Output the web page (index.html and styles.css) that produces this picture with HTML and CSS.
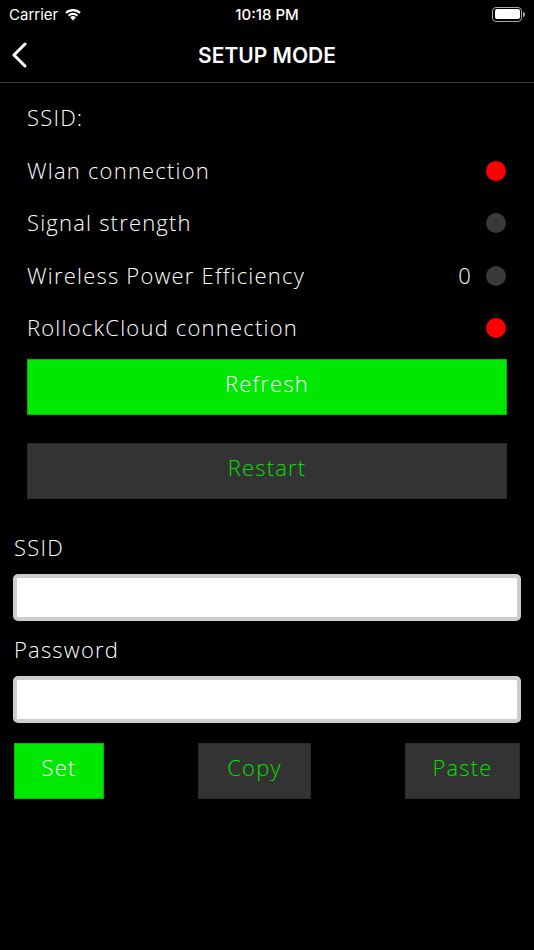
FILE: index.html
```html
<!DOCTYPE html>
<html>
<head>
    <title>Setup Mode</title>
    <link rel="stylesheet" href="styles.css">
</head>
<body>
    <div class="status-bar">
        <div class="carrier">
            Carrier
            <svg class="wifi" width="18" height="13" viewBox="0 0 18 13">
                <path d="M9 12.5 L6.2 9.4 A4 4 0 0 1 11.8 9.4 Z" fill="#fff"/>
                <path d="M3.9 6.9 A7.4 7.4 0 0 1 14.1 6.9 L12.6 8.5 A5.2 5.2 0 0 0 5.4 8.5 Z" fill="#fff"/>
                <path d="M1.2 4.1 A11.2 11.2 0 0 1 16.8 4.1 L15.3 5.7 A9 9 0 0 0 2.7 5.7 Z" fill="#fff"/>
            </svg>
        </div>
        <div class="time">10:18 PM</div>
        <div class="battery">
            <div class="battery-body"><div class="battery-fill"></div></div>
            <div class="battery-tip"></div>
        </div>
    </div>

    <div class="nav-bar">
        <svg class="back" width="18" height="26" viewBox="0 0 18 26">
            <path d="M14 2 L3 13 L14 24" fill="none" stroke="#fff" stroke-width="3" stroke-linecap="round" stroke-linejoin="round"/>
        </svg>
        <h1>SETUP MODE</h1>
    </div>

    <div class="status-section">
        <div class="row"><span>SSID:</span></div>
        <div class="row"><span>Wlan connection</span><span class="dot red"></span></div>
        <div class="row"><span>Signal strength</span><span class="dot grey"></span></div>
        <div class="row"><span>Wireless Power Efficiency</span><span class="value">0</span><span class="dot grey"></span></div>
        <div class="row"><span>RollockCloud connection</span><span class="dot red"></span></div>

        <button class="wide primary">Refresh</button>
        <button class="wide secondary">Restart</button>
    </div>

    <div class="form-section">
        <label for="ssid">SSID</label>
        <input type="text" id="ssid">
        <label for="password">Password</label>
        <input type="text" id="password">

        <div class="actions">
            <button class="primary set">Set</button>
            <button class="secondary copy">Copy</button>
            <button class="secondary paste">Paste</button>
        </div>
    </div>
</body>
</html>
```

FILE: styles.css
```css
body {
    margin: 0;
    background-color: #000;
    color: #fff;
    font-family: "Open Sans", "Noto Sans", sans-serif;
    font-weight: 300;
    width: 534px;
    height: 950px;
    overflow: hidden;
}
.status-bar {
    height: 28px;
    display: flex;
    align-items: center;
    justify-content: space-between;
    padding: 0 9px;
    font-family: Inter, "Liberation Sans", sans-serif;
    font-weight: 400;
    font-size: 15px;
    position: relative;
}
.carrier {
    display: flex;
    align-items: center;
    gap: 6px;
    width: 120px;
}
.time {
    font-weight: 500;
}
.battery {
    width: 120px;
    display: flex;
    justify-content: flex-end;
    align-items: center;
}
.battery-body {
    width: 25px;
    height: 10px;
    border: 1.5px solid #aaa;
    border-radius: 4px;
    padding: 1.5px;
}
.battery-fill {
    width: 100%;
    height: 100%;
    background-color: #fff;
    border-radius: 2px;
}
.battery-tip {
    width: 2px;
    height: 5px;
    background-color: #aaa;
    border-radius: 0 2px 2px 0;
    margin-left: 1px;
}
.nav-bar {
    height: 54px;
    display: flex;
    align-items: center;
    justify-content: center;
    border-bottom: 1px solid #3c3c3c;
    position: relative;
}
.back {
    position: absolute;
    left: 11px;
    top: 14px;
}
h1 {
    margin: 0;
    font-family: Inter, "Liberation Sans", sans-serif;
    font-size: 21px;
    font-weight: 600;
}
.status-section {
    padding: 8px 27px 0 27px;
}
.row {
    height: 52.5px;
    display: flex;
    align-items: center;
    font-size: 22px;
    letter-spacing: 1.2px;
}
.row span:first-child {
    flex: 1;
}
.value {
    margin-right: 14px;
}
.dot {
    width: 20px;
    height: 20px;
    border-radius: 50%;
    margin-right: 1px;
    margin-top: 2px;
}
.dot.red {
    background-color: #ff0000;
}
.dot.grey {
    background-color: #3a3a3a;
}
button {
    font-family: "Open Sans", "Noto Sans", sans-serif;
    font-weight: 300;
    font-size: 22px;
    letter-spacing: 1.2px;
    height: 56px;
    border-radius: 0;
    cursor: pointer;
    padding: 0 0 8px 0;
}
button.primary {
    background-color: #00e800;
    border: 1px solid #00b800;
    color: #fff;
}
button.secondary {
    background-color: #333;
    border: 1px solid #2a2a2a;
    color: #00e000;
}
button.wide {
    display: block;
    width: 100%;
}
.status-section .primary {
    margin-top: 5px;
}
.status-section .secondary {
    margin-top: 28px;
}
.form-section {
    padding: 36px 13px 0 13px;
}
label {
    display: block;
    font-size: 22px;
    letter-spacing: 1.2px;
    margin-left: 1px;
    height: 26px;
    line-height: 24px;
}
input[type="text"] {
    display: block;
    box-sizing: border-box;
    width: 100%;
    height: 47px;
    border: 4px solid #cdcdcd;
    border-radius: 5px;
    background-color: #fff;
    margin: 13px 0 16px 0;
    font-size: 18px;
}
.actions {
    display: flex;
    justify-content: space-between;
    margin-top: 20px;
}
.set {
    width: 90px;
    margin-left: 1px;
}
.copy {
    width: 113px;
    margin-left: 94px;
}
.paste {
    width: 115px;
    margin-left: auto;
    margin-right: 1px;
}
.actions .copy {
    margin-right: auto;
}
```
